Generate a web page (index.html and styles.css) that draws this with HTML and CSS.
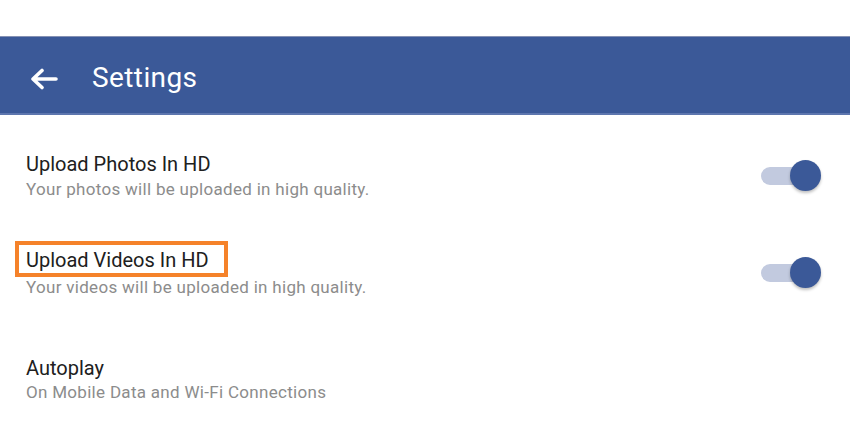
FILE: index.html
```html
<!DOCTYPE html>
<html lang="en">
<head>
    <meta charset="UTF-8">
    <meta name="viewport" content="width=device-width, initial-scale=1.0">
    <title>Settings</title>
    <link rel="stylesheet" href="styles.css">
</head>
<body>
    <div class="status"></div>
    <div class="toolbar">
        <svg class="back" width="28" height="22" viewBox="0 0 28 22">
            <path d="M26 11 H3.5 M12 2.5 L3 11 L12 19.5" fill="none" stroke="#fff" stroke-width="3.6" stroke-linecap="round" stroke-linejoin="round"/>
        </svg>
        <span class="title">Settings</span>
    </div>
    <div class="list">
        <div class="row row-photos">
            <div class="text">
                <p class="label">Upload Photos In HD</p>
                <p class="sub">Your photos will be uploaded in high quality.</p>
            </div>
            <div class="switch"><span class="track"></span><span class="thumb"></span></div>
        </div>
        <div class="row row-videos">
            <div class="text">
                <p class="label"><span class="marked">Upload Videos In HD</span></p>
                <p class="sub">Your videos will be uploaded in high quality.</p>
            </div>
            <div class="switch"><span class="track"></span><span class="thumb"></span></div>
        </div>
        <div class="row row-autoplay">
            <div class="text">
                <p class="label">Autoplay</p>
                <p class="sub">On Mobile Data and Wi-Fi Connections</p>
            </div>
        </div>
    </div>
</body>
</html>
```

FILE: styles.css
```css
*{
    margin: 0;
    padding: 0;
    box-sizing: border-box;
}
body{
    width: 850px;
    height: 444px;
    overflow: hidden;
    background: #fff;
    font-family: Roboto, "Liberation Sans", sans-serif;
}
.status{
    height: 36px;
}
.toolbar{
    height: 79px;
    background: #3b5998;
    border-top: 1px solid #8591b4;
    border-bottom: 2px solid #5d76ae;
    display: flex;
    align-items: center;
    padding: 6px 0 0 30px;
}
.toolbar .back{
    display: block;
    margin-top: 2px;
}
.toolbar .title{
    color: #fff;
    font-size: 28px;
    line-height: 32px;
    letter-spacing: 0.4px;
    margin-left: 34px;
}
.row{
    display: flex;
    align-items: center;
    justify-content: space-between;
    padding: 0 29px 0 26px;
}
.row-photos{
    margin-top: 37px;
}
.row-videos{
    margin-top: 49px;
}
.row-autoplay{
    margin-top: 59px;
}
.label{
    font-size: 20px;
    line-height: 24px;
    color: #202020;
}
.sub{
    font-size: 17px;
    line-height: 20px;
    letter-spacing: 0.3px;
    color: #8c8c8c;
    margin-top: 3px;
}
.row-videos .sub{
    margin-top: 5px;
}
.row-autoplay .sub{
    margin-top: 2px;
}
.marked{
    position: relative;
    display: inline-block;
}
.marked::after{
    content: "";
    position: absolute;
    top: -7px;
    bottom: -5px;
    left: -11px;
    right: -19px;
    border: 4px solid #f5822a;
}
.switch{
    width: 60px;
    height: 32px;
    display: flex;
    align-items: center;
}
.track{
    width: 54px;
    height: 18px;
    border-radius: 9px;
    background: #c2cadf;
}
.thumb{
    width: 31px;
    height: 31px;
    border-radius: 50%;
    background: #3b5998;
    margin-left: -25px;
    box-shadow: 0 2px 3px rgba(0, 0, 0, 0.25);
}
```
